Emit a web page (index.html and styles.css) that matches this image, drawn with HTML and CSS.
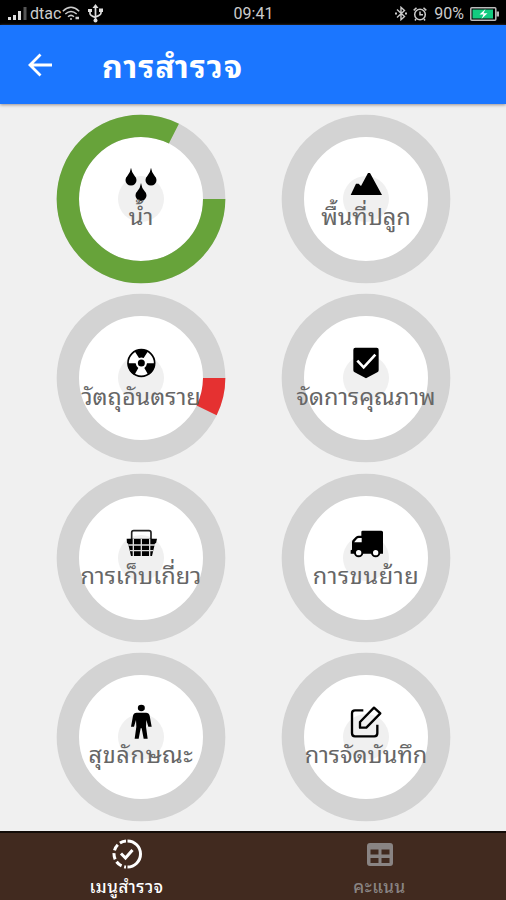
FILE: index.html
```html
<!DOCTYPE html>
<html lang="th">
<head>
<meta charset="utf-8">
<title>การสำรวจ</title>
<link rel="stylesheet" href="styles.css">
</head>
<body>
<div class="status">
  <div class="status-left">
    <svg class="signal" width="20" height="14" viewBox="0 0 20 14"><path fill="#ddd" d="M0 10h3v3H0zM5 8h3v5H5zM10 4h3v9h-3z"/><path fill="#555" d="M15.500 0h3v13h-3z"/></svg>
    <span class="carrier">dtac</span>
    <svg class="wifi" width="18" height="15" viewBox="0 0 18 15" fill="none" stroke="#ccc" stroke-width="1.500"><path d="M.8 5.200Q9-2.700 17.200 5.200M3.300 8q5.700-5 11.400 0M6 10.700q3-2.600 6 0"/><circle cx="9" cy="13" r="1" fill="#ccc" stroke="none"/><path d="M13.500 12h3.500" stroke-width="2.500"/></svg>
    <svg class="usb" width="15" height="19" viewBox="0 0 15 19" fill="none" stroke="#ddd" stroke-width="1.700"><path d="M7.500 3v13M2 7v2.500q0 2 5.500 4M13 6v3q0 2-5.500 4"/><path fill="#ddd" stroke="none" d="M7.500 0l3 4h-6zM0 5h4v3H0zM11 4.500h4V8h-4z"/><circle cx="7.500" cy="16.500" r="2" fill="#ddd" stroke="none"/></svg>
  </div>
  <span class="clock">09:41</span>
  <div class="status-right">
    <svg width="12" height="15" viewBox="0 0 12 15" fill="none" stroke="#ccc" stroke-width="1.400"><path d="M2 3.500l7.500 7-3.500 3.200V1.300L9.500 4.500l-7.500 7"/><path d="M0 7.500h2M10 7.500h2" stroke-width="1.800"/></svg>
    <svg class="alarm" width="14" height="14" viewBox="0 0 14 14" fill="none" stroke="#ccc" stroke-width="1.500"><circle cx="7" cy="7.500" r="5.300"/><path d="M7 4.500v3.300h3M.7 3.400L3.500.8M13.300 3.400L10.500.8M3 12l-1 1.500M11 12l1 1.500"/></svg>
    <span class="percent">90%</span>
    <svg class="battery" width="29" height="14" viewBox="0 0 29 14"><rect x=".8" y=".8" width="25" height="12.400" rx="1" fill="#000" stroke="#bbb" stroke-width="1.500"/><path fill="#12cb80" d="M2.500 2.500h20.500v9H2.500z"/><path fill="#bbb" d="M26.500 4.500H29v5h-2.500z"/><path fill="#fff" d="M15.500 2l-6 5.600h4L11.500 12l6-5.700h-4z"/></svg>
  </div>
</div>
<header class="appbar">
  <svg class="back" width="24" height="24" viewBox="0 0 24 24" fill="none" stroke="#fff" stroke-width="2.800"><path d="M12.500 1.500L2 12l10.500 10.500M2 12h22"/></svg>
  <h1 class="title">การสำรวจ</h1>
</header>
<main class="menu">
  <section class="item">
    <svg class="ring" viewBox="18 18 510 510"><circle class="track" cx="273" cy="273" r="219.500"/><circle class="value green" cx="273" cy="273" r="219.500" pathLength="360" stroke-dasharray="296.400 360"/><circle class="hub" cx="273" cy="273" r="69"/>
      <path d="M243 179q2 15 11 25a16.500 16.500 0 1 1-22 0q9-10 11-25zM303 179q2 15 11 25a16.500 16.500 0 1 1-22 0q9-10 11-25zM273 225q2 15 11 25a16.500 16.500 0 1 1-22 0q9-10 11-25z"/></svg>
    <span class="label">น้ำ</span>
  </section>
  <section class="item">
    <svg class="ring" viewBox="15 18 510 510"><circle class="track" cx="270" cy="273" r="219.500"/><circle class="hub" cx="270" cy="273" r="69"/>
      <path d="M224 261l16-34 8 0 7 7 21-39h6l36 66z"/></svg>
    <span class="label">พื้นที่ปลูก</span>
  </section>
  <section class="item">
    <svg class="ring" viewBox="18 16 510 510"><circle class="track" cx="273" cy="271" r="219.500"/><circle class="value red" cx="273" cy="271" r="219.500" pathLength="360" stroke-dasharray="26.300 360"/><circle class="hub" cx="273" cy="271" r="69"/>
      <circle cx="274" cy="226" r="40" fill="#fff" stroke="#000" stroke-width="5"/><circle cx="274" cy="226" r="10.500"/><path d="M267 211l-13-20q20-10 40 0l-13 20q-7-3-14 0zM257 227h-24q1 22 20 35l12-21q-7-5-8-14zM291 227h24q-1 22-20 35l-12-21q7-5 8-14z"/></svg>
    <span class="label">วัตถุอันตราย</span>
  </section>
  <section class="item">
    <svg class="ring" viewBox="15 16 510 510"><circle class="track" cx="270" cy="271" r="219.500"/><circle class="hub" cx="270" cy="271" r="69"/>
      <path d="M238 180h64q6 0 6 6v62q0 4-4 6l-34 18-34-18q-4-2-4-6v-62q0-6 6-6z"/><path d="M244 219l19 20 35-38" fill="none" stroke="#fff" stroke-width="8"/></svg>
    <span class="label">จัดการคุณภาพ</span>
  </section>
  <section class="item">
    <svg class="ring" viewBox="18 14 510 510"><circle class="track" cx="273" cy="269" r="219.500"/><circle class="hub" cx="273" cy="269" r="69"/>
      <path d="M245 215v-22q0-6 6-6h46q6 0 6 6v22" fill="none" stroke="#222" stroke-width="5"/><path d="M230 211h91l-3 14h-3l-9 38h-63l-9-38h-3z"/><path d="M235 230h80M240 247h70M250 212v51M274 212v51M299 212v51" stroke="#ddd" stroke-width="4"/></svg>
    <span class="label">การเก็บเกี่ยว</span>
  </section>
  <section class="item">
    <svg class="ring" viewBox="15 14 510 510"><circle class="track" cx="270" cy="269" r="219.500"/><circle class="hub" cx="270" cy="269" r="69"/>
      <path d="M260 187h56q5 0 5 5v64h-97v-10l4-2v-23q0-4 3-7l8-8q4-4 9-4h8v-11q0-4 4-4z"/><path fill="#fff" d="M235 221l8-10q2-2 5-2h9v13h-22z"/><g fill="#fff" stroke="#000" stroke-width="6"><circle cx="248" cy="253" r="11"/><circle cx="299" cy="253" r="11"/></g></svg>
    <span class="label spaced">การขนย้าย</span>
  </section>
  <section class="item">
    <svg class="ring" viewBox="18 12 510 510"><circle class="track" cx="273" cy="267" r="219.500"/><circle class="hub" cx="273" cy="267" r="69"/>
      <ellipse cx="274" cy="180" rx="10.500" ry="9.500"/><path d="M260 194h28q9 0 11 9l6 33h-10l-6-20-1 20 5 36h-12l-6-31h-3l-6 31h-12l5-36-1-20-6 20h-9l6-33q2-9 11-9z"/></svg>
    <span class="label spaced">สุขลักษณะ</span>
  </section>
  <section class="item">
    <svg class="ring" viewBox="15 12 510 510"><circle class="track" cx="270" cy="267" r="219.500"/><circle class="hub" cx="270" cy="267" r="69"/>
      <path d="M262 187h-25q-9 0-9 9v60q0 9 9 9h58q9 0 9-9v-26M252 222l42-43 19 17-42 43h-19z" fill="none" stroke="#000" stroke-width="7" stroke-linejoin="round"/></svg>
    <span class="label">การจัดบันทึก</span>
  </section>
</main>
<nav class="tabs">
  <div class="tab active">
    <svg width="30" height="30" viewBox="0 0 30 30" fill="none" stroke="#fff" stroke-width="3"><path d="M15.500 2a13 13 0 0 1 0 26"/><path d="M14 2a13 13 0 0 0-12 13 13 13 0 0 0 12 13" stroke-dasharray="6.500 2.700"/><path d="M9 14.500l4.500 4.500 7-8"/></svg>
    <span class="tab-label">เมนูสำรวจ</span>
  </div>
  <div class="tab">
    <svg width="30" height="30" viewBox="0 0 30 30"><path fill="#898483" fill-rule="evenodd" d="M5 4h20q3 0 3 3v17q0 3-3 3H5q-3 0-3-3V7q0-3 3-3zM5.500 10.500v5h8v-5zM16.500 10.500v5h8v-5zM5.500 19v5h8v-5zM16.500 19v5h8v-5z"/></svg>
    <span class="tab-label">คะแนน</span>
  </div>
</nav>
</body>
</html>
```

FILE: styles.css
```css
* { box-sizing: border-box; }
body {
  margin: 0;
  width: 506px;
  height: 900px;
  display: flex;
  flex-direction: column;
  overflow: hidden;
  background: #f0f0f0;
  font-family: Roboto, "Noto Sans", "Noto Sans Thai Looped", "Noto Sans Thai", sans-serif;
}
.status {
  height: 25px;
  flex: none;
  display: grid;
  grid-template-columns: 1fr auto 1fr;
  align-items: center;
  padding: 2px 7px 0 8px;
  background: #000;
  color: #ccc;
  font-size: 16px;
  line-height: 23px;
}
.status svg { flex: none; }
.status-left, .status-right { display: flex; align-items: center; }
.status-right { justify-content: flex-end; }
.carrier { margin-left: 2px; width: 32px; }
.usb { margin-left: 8px; }
.alarm { margin-left: 6px; }
.percent { margin-left: 7px; }
.battery { margin-left: 6px; }
.appbar {
  height: 79px;
  flex: none;
  display: flex;
  align-items: center;
  padding-left: 28px;
  gap: 50px;
  background: #1b76ff;
  box-shadow: 0 1px 3px #9a9090;
}
.title {
  margin: 5px 0 0;
  color: #fff;
  font-size: 32px;
  font-weight: 700;
  letter-spacing: 1px;
  line-height: 40px;
  white-space: nowrap;
}
.menu {
  height: 727px;
  flex: none;
  display: grid;
  grid-template-columns: 225px 225px;
  grid-template-rows: repeat(4, 179.300px);
  padding: 5.300px 0 0 28.500px;
}
.item { display: grid; place-items: center; }
.ring, .label { grid-area: 1 / 1; }
.ring { width: 170px; height: 170px; }
.track { fill: #fff; stroke: #d3d3d3; stroke-width: 67px; }
.value { fill: none; stroke-width: 67px; }
.green { stroke: #67a33a; }
.red { stroke: #e53131; }
.hub { fill: #f0f0f0; }
.label {
  margin-top: 37px;
  color: #666;
  font-size: 23.500px;
  line-height: 30px;
  white-space: nowrap;
}
.spaced { letter-spacing: .6px; }
.tabs {
  height: 69px;
  flex: none;
  display: grid;
  grid-template-columns: 1fr 1fr;
  border-top: 2px solid #130c08;
  background: #412a1f;
}
.tab {
  display: flex;
  flex-direction: column;
  align-items: center;
  padding-top: 6px;
  color: #898483;
}
.active { color: #fff; }
.tab-label {
  margin-top: 6px;
  font-size: 17px;
  font-weight: 500;
  letter-spacing: .5px;
  line-height: 24px;
  white-space: nowrap;
}
```
